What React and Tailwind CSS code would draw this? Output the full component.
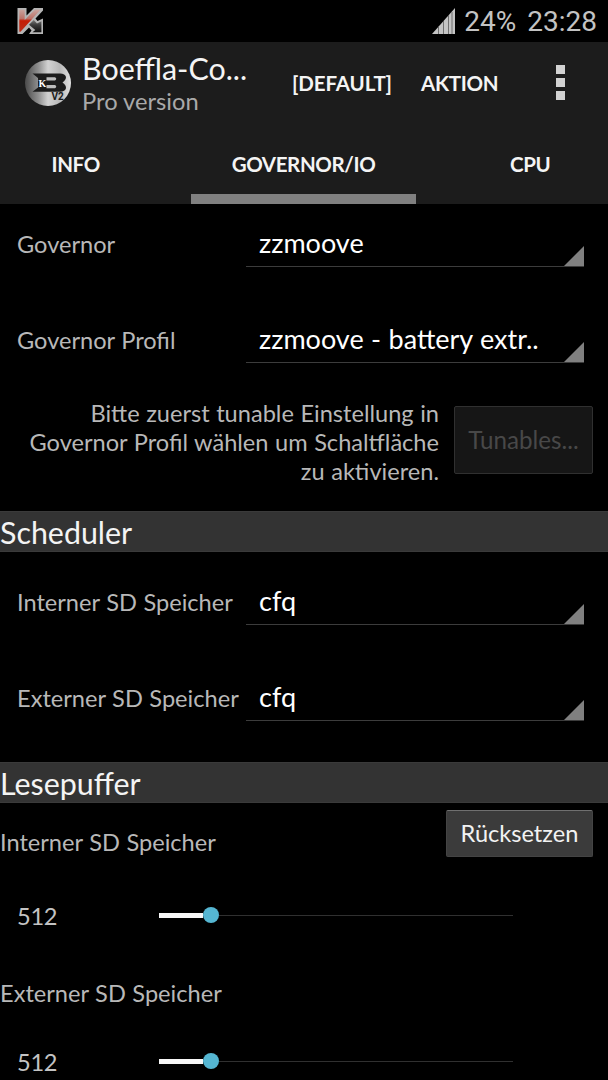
const TEXT = "whitespace-nowrap leading-[30px]";

function StatusBar() {
  return (
    <div className="flex h-[42px] items-center justify-between bg-black pr-[11px] pl-[17px] font-[Roboto,sans-serif] text-[#c3c3c3]">
      <svg width="27" height="28" viewBox="0 0 27 28">
        <defs>
          <linearGradient id="kred" x1="0" y1="0" x2="0" y2="1">
            <stop offset="0" stopColor="#c9a39d" />
            <stop offset="0.4" stopColor="#bd7268" />
            <stop offset="0.5" stopColor="#c51c05" />
            <stop offset="1" stopColor="#b92e1a" />
          </linearGradient>
          <linearGradient id="kdark" x1="0" y1="0" x2="0" y2="1">
            <stop offset="0" stopColor="#7a7a7a" />
            <stop offset="0.4" stopColor="#3c3c3c" />
            <stop offset="1" stopColor="#0c0c0c" />
          </linearGradient>
        </defs>
        <path d="M0.500 1H9.500V8.500L17 1H26V3.500L18.500 11.500L20.500 14L26 11.500V27H12L14.500 23.500L12 20.500L5.500 27H0.500Z" fill="#b5b5b5" />
        <path d="M2.300 2.800H7.700V13L17.800 2.800H23.500L3.500 24.700H2.300Z" fill="url(#kred)" />
        <path d="M12 17.800L16.800 13L20 16.500L24.400 14.300V25.300H15.500L18.300 23Z" fill="url(#kdark)" />
      </svg>
      <div className="flex items-center">
        <svg width="24" height="27" viewBox="0 0 24 27" className="mr-[8px]">
          <path d="M0 26L23 0V26Z" fill="#c4c4c4" />
          <path d="M6.500 18V26M11.500 13V26M16.500 7V26M20 4V26" stroke="#595959" strokeWidth="0.8" />
        </svg>
        <span className="mr-[11px] pt-px text-[28px] leading-none">24%</span>
        <span className="pt-[2px] text-[28px] leading-none">23:28</span>
      </div>
    </div>
  );
}

function AppLogo() {
  return (
    <svg width="48" height="48" viewBox="0 0 48 48">
      <defs>
        <linearGradient id="disc" x1="0" x2="1">
          <stop offset="0" stopColor="#4a4a4a" />
          <stop offset="0.3" stopColor="#929292" />
          <stop offset="0.5" stopColor="#d2d2d2" />
          <stop offset="0.75" stopColor="#b8b8b8" />
          <stop offset="1" stopColor="#e2e2e2" />
        </linearGradient>
      </defs>
      <circle cx="24" cy="24" r="23" fill="url(#disc)" />
      <path d="M8.500 14.500H36C43 14.500 44 20 38.500 23.500C44 27 43 32.700 36 32.700H8.500L14 28.500V19Z" fill="#1c1c1c" />
      <path d="M22.500 18.200H31Q33.500 19.800 31 21.400H22.500ZM22.500 26H31Q33.500 27.600 31 29.200H22.500Z" fill="#bdbdbd" />
      <text x="14.500" y="27.500" fontSize="10" fontWeight="700" fontFamily="Liberation Serif, serif" fill="#fff">K</text>
      <text x="27.500" y="41" fontSize="10" fontWeight="700" fontFamily="Roboto, sans-serif" fill="#1c1c1c" style={{ wordSpacing: 0 }}>V2</text>
    </svg>
  );
}

function Header() {
  return (
    <header className="h-[162px] bg-[#1c1c1c] text-[#f4f4f4]">
      <div className="flex h-[81px] items-center">
        <div className="ml-6 w-[58px]"><AppLogo /></div>
        <div className="flex w-[210px] flex-col pt-[4px]">
          <span className="text-[30.400px] leading-[33px] whitespace-nowrap">Boeffla-Co...</span>
          <span className="text-[23.700px] leading-[32px] whitespace-nowrap text-[#a9a9a9] [word-spacing:0px]">Pro version</span>
        </div>
        <span className={`${TEXT} w-[129px] text-[20.500px] font-bold tracking-[-0.1px]`}>[DEFAULT]</span>
        <span className={`${TEXT} w-[135px] text-[20.500px] font-bold tracking-[-0.3px]`}>AKTION</span>
        <div className="flex flex-col gap-1">
          <i className="size-[9px] bg-[#d2d2d2]" />
          <i className="size-[9px] bg-[#d2d2d2]" />
          <i className="size-[9px] bg-[#d2d2d2]" />
        </div>
      </div>
      <nav className="flex h-[81px] pt-[2px] text-[20.500px] font-bold tracking-[-0.38px]">
        <div className="flex w-[191px] pt-[24px] pl-[51.500px]"><span className={TEXT}>INFO</span></div>
        <div className="flex w-[225px] justify-center border-b-10 border-[#808080] pt-[24px]"><span className={TEXT}>GOVERNOR/IO</span></div>
        <div className="flex flex-1 pt-[24px] pl-[94px]"><span className={TEXT}>CPU</span></div>
      </nav>
    </header>
  );
}

function SpinnerRow({ label, value }) {
  return (
    <div className="flex h-24 pl-[17px]">
      <span className={`${TEXT} w-[229px] pt-[25px] text-[#b8b8b8]`}>{label}</span>
      <div className="flex h-[63px] w-[338px] items-end justify-between border-b border-[#3c3c3c] pl-[13px]">
        <span className={`${TEXT} pb-[8px] text-[27px] text-white [word-spacing:0.500px]`}>{value}</span>
        <svg width="20" height="20" viewBox="0 0 20 20"><path d="M20 0V20H0Z" fill="#808080" /></svg>
      </div>
    </div>
  );
}

function Section({ children }) {
  return (
    <h2 className="h-[41px] border-y border-[#3a3a3a] bg-[#333] text-[30.400px] leading-[40px] whitespace-nowrap text-[#f4f4f4]">{children}</h2>
  );
}

function SliderRow({ value }) {
  return (
    <div className="flex h-[30px] items-center pl-[17px] text-[#c3c3c3]">
      <span className={`${TEXT} w-[142px] pt-px tracking-[-0.3px]`}>{value}</span>
      <div className="flex w-[354px] items-center">
        <div className="h-[5px] w-[44px] bg-[#f7f7f7]" />
        <div className="size-4 rounded-full bg-[#55b6d2]" />
        <div className="h-px flex-1 bg-[#303030]" />
      </div>
    </div>
  );
}

export default function App() {
  return (
    <div className="h-[1080px] w-[608px] overflow-hidden bg-black font-[Lato,sans-serif] text-[23.600px] [word-spacing:0.500px]">
      <StatusBar />
      <Header />
      <main>
        <SpinnerRow label="Governor" value="zzmoove" />
        <SpinnerRow label="Governor Profil" value="zzmoove - battery extr.." />
        <div className="flex h-[115px] pt-[2px]">
          <p className="w-[439px] pt-px text-right leading-[29px] whitespace-nowrap text-[#b8b8b8]">
            Bitte zuerst tunable Einstellung in<br />Governor Profil wählen um Schaltfläche<br />zu aktivieren.
          </p>
          <button className="mt-[8px] ml-[15px] h-[68px] w-[139px] rounded-xs border border-[#303030] bg-[#161616] text-[24.200px] whitespace-nowrap text-[#484848]">Tunables...</button>
        </div>
        <Section>Scheduler</Section>
        <div className="h-[210px] pt-[10px]">
          <SpinnerRow label="Interner SD Speicher" value="cfq" />
          <SpinnerRow label="Externer SD Speicher" value="cfq" />
        </div>
        <Section>Lesepuffer</Section>
        <div className="flex h-[97px] justify-between pt-[7px] pr-[15px]">
          <span className={`${TEXT} pt-[17px] text-[#b8b8b8]`}>Interner SD Speicher</span>
          <button className="h-[47px] w-[147px] rounded-xs border border-[#444] border-t-[#707070] bg-[#3b3b3b] pt-px whitespace-nowrap text-[#f2f2f2]">Rücksetzen</button>
        </div>
        <SliderRow value="512" />
        <div className={`${TEXT} h-[116px] pt-[48px] text-[#b8b8b8]`}>Externer SD Speicher</div>
        <SliderRow value="512" />
      </main>
    </div>
  );
}
